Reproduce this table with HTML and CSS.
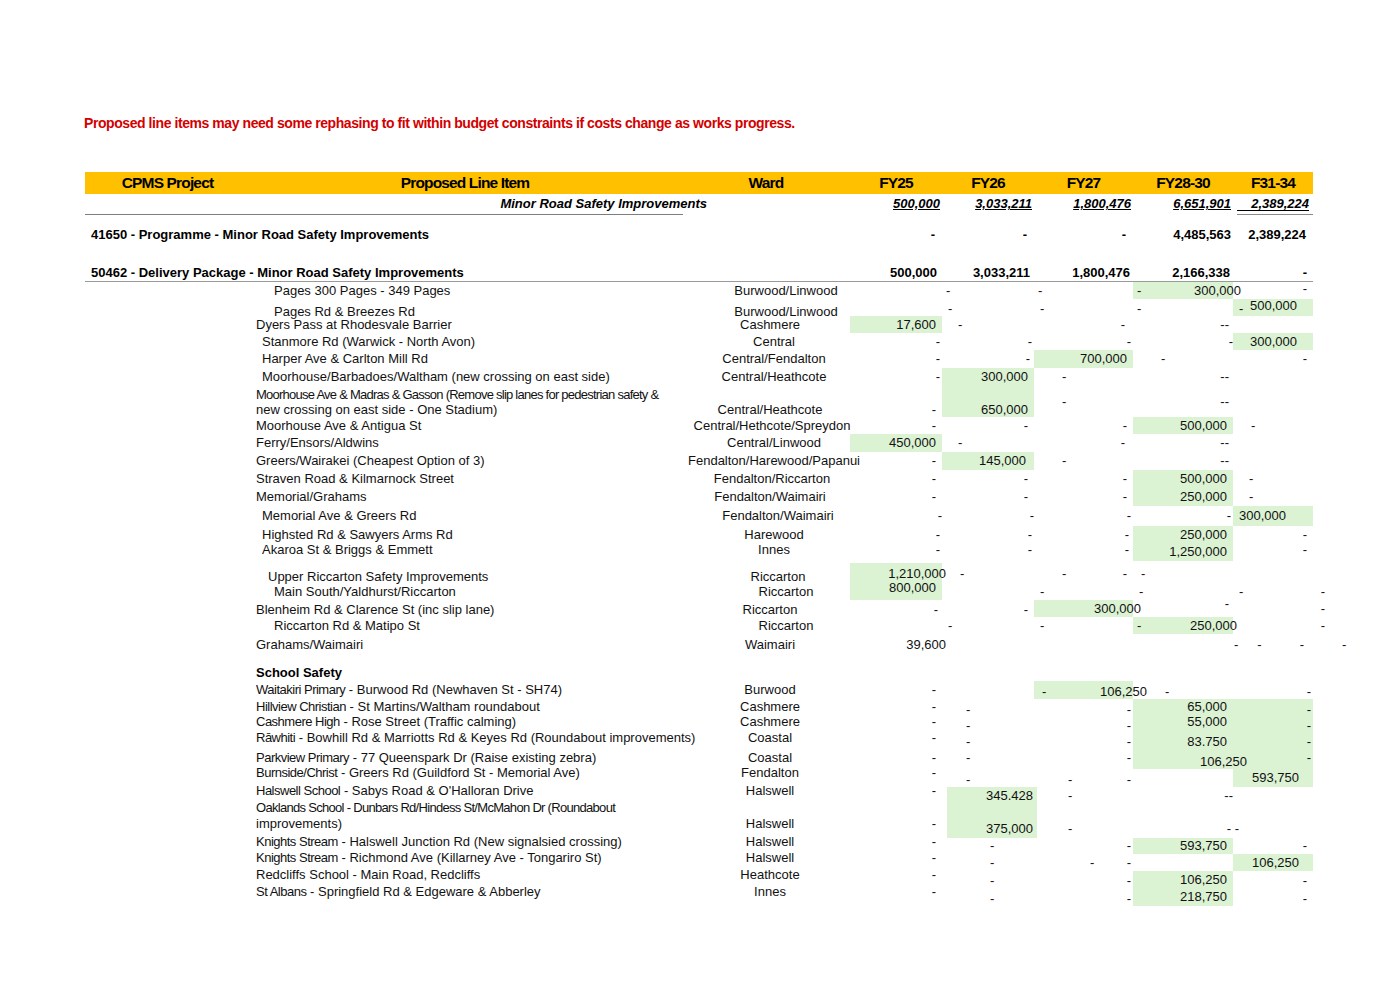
FILE: index.html
```html
<!DOCTYPE html>
<html lang="en">
<head>
<meta charset="utf-8">
<title>Minor Road Safety Improvements</title>
<link rel="stylesheet" href="styles.css">
</head>
<body>
<div class="page">
  <p class="note">Proposed line items may need some rephasing to fit within budget constraints if costs change as works progress.</p>

  <div class="sheet">
    <div class="row hdr">
      <div>CPMS Project</div>
      <div class="hpl">Proposed Line Item</div>
      <div class="hw">Ward</div>
      <div>FY25</div>
      <div>FY26</div>
      <div>FY27</div>
      <div>FY28-30</div>
      <div>F31-34</div>
    </div>

    <div class="row h20 sub">
      <div class="span3 n pr143">Minor Road Safety Improvements</div>
      <div class="n pr2"><u>500,000</u></div>
      <div class="n pr2"><u>3,033,211</u></div>
      <div class="n pr2"><u>1,800,476</u></div>
      <div class="n pr2"><u>6,651,901</u></div>
      <div class="n pr4"><span class="ubar">2,389,224</span></div>
    </div>
    <div class="rule1"><div class="rl"></div><div class="rr"></div></div>

    <div class="row h16 bold mt12">
      <div class="span3 pl6">41650 - Programme - Minor Road Safety Improvements</div>
      <div class="n pr7">-</div>
      <div class="n pr7">-</div>
      <div class="n pr7">-</div>
      <div class="n pr2">4,485,563</div>
      <div class="n pr7">2,389,224</div>
    </div>

    <div class="row h16 bold mt22">
      <div class="span3 pl6">50462 - Delivery Package - Minor Road Safety Improvements</div>
      <div class="n pr5">500,000</div>
      <div class="n pr4">3,033,211</div>
      <div class="n pr3">1,800,476</div>
      <div class="n pr3">2,166,338</div>
      <div class="n pr6">-</div>
    </div>
    <div class="rule2"></div>

    <!-- R1 -->
    <div class="row h17">
      <div></div>
      <div class="pl24">Pages 300 Pages - 349 Pages</div>
      <div class="wd w16">Burwood/Linwood</div>
      <div></div>
      <div class="l pl4">-</div>
      <div class="l pl4">-</div>
      <div class="g sb pl4"><span>-</span><span class="o8">300,000</span></div>
      <div class="n pr6 vt">-</div>
    </div>
    <!-- R2 -->
    <div class="row h17">
      <div></div>
      <div class="pl24 lo">Pages Rd &amp; Breezes Rd</div>
      <div class="wd w16 lo">Burwood/Linwood</div>
      <div></div>
      <div class="l pl6 vb">-</div>
      <div class="l pl6 vb">-</div>
      <div class="l pl4 vb">-</div>
      <div class="g sb pl6 pr16"><span class="se">-</span><span class="st">500,000</span></div>
    </div>
    <!-- R3 -->
    <div class="row h17">
      <div></div>
      <div class="pl6">Dyers Pass at Rhodesvale Barrier</div>
      <div class="wd">Cashmere</div>
      <div class="g n pr6">17,600</div>
      <div class="l pl16">-</div>
      <div class="n pr8">-</div>
      <div class="n pr4">--</div>
      <div></div>
    </div>
    <!-- R4 -->
    <div class="row h17">
      <div></div>
      <div class="pl12">Stanmore Rd (Warwick - North Avon)</div>
      <div class="wd w4">Central</div>
      <div class="n pr2">-</div>
      <div class="n pr2">-</div>
      <div class="n pr2">-</div>
      <div class="n pr0">-</div>
      <div class="g n pr16">300,000</div>
    </div>
    <!-- R5 -->
    <div class="row h18">
      <div></div>
      <div class="pl12">Harper Ave &amp; Carlton Mill Rd</div>
      <div class="wd w4">Central/Fendalton</div>
      <div class="n pr2">-</div>
      <div class="n pr4">-</div>
      <div class="g n pr6">700,000</div>
      <div class="l pl28">-</div>
      <div class="n pr6">-</div>
    </div>
    <!-- R6 -->
    <div class="row h18">
      <div></div>
      <div class="pl12">Moorhouse/Barbadoes/Waltham (new crossing on east side)</div>
      <div class="wd w4">Central/Heathcote</div>
      <div class="n pr2">-</div>
      <div class="g n pr6">300,000</div>
      <div class="l pl28">-</div>
      <div class="n pr4">--</div>
      <div></div>
    </div>
    <!-- R7 -->
    <div class="row h31">
      <div></div>
      <div class="pl6"><span class="two"><span class="cn">Moorhouse Ave &amp; Madras &amp; Gasson (Remove slip lanes for pedestrian safety &amp;</span><br>new crossing on east side - One Stadium)</span></div>
      <div class="wd vb">Central/Heathcote</div>
      <div class="n pr6 vb">-</div>
      <div class="g n pr6 vb">650,000</div>
      <div class="l pl28">-</div>
      <div class="n pr4">--</div>
      <div></div>
    </div>
    <!-- R8 -->
    <div class="row h17">
      <div></div>
      <div class="pl6">Moorhouse Ave &amp; Antigua St</div>
      <div class="wd w2">Central/Hethcote/Spreydon</div>
      <div class="n pr6">-</div>
      <div class="n pr6">-</div>
      <div class="n pr6">-</div>
      <div class="g n pr6">500,000</div>
      <div class="l pl18">-</div>
    </div>
    <!-- R9 -->
    <div class="row h18">
      <div></div>
      <div class="pl6">Ferry/Ensors/Aldwins</div>
      <div class="wd w4">Central/Linwood</div>
      <div class="g n pr6">450,000</div>
      <div class="l pl16">-</div>
      <div class="n pr8">-</div>
      <div class="n pr4">--</div>
      <div></div>
    </div>
    <!-- R10 -->
    <div class="row h18">
      <div></div>
      <div class="pl6">Greers/Wairakei (Cheapest Option of 3)</div>
      <div class="wd w4">Fendalton/Harewood/Papanui</div>
      <div class="n pr6">-</div>
      <div class="g n pr8">145,000</div>
      <div class="l pl28">-</div>
      <div class="n pr4">--</div>
      <div></div>
    </div>
    <!-- R11 -->
    <div class="row h18">
      <div></div>
      <div class="pl6">Straven Road &amp; Kilmarnock Street</div>
      <div class="wd w2">Fendalton/Riccarton</div>
      <div class="n pr6">-</div>
      <div class="n pr6">-</div>
      <div class="n pr6">-</div>
      <div class="g n pr6">500,000</div>
      <div class="l pl16">-</div>
    </div>
    <!-- R12 -->
    <div class="row h18">
      <div></div>
      <div class="pl6">Memorial/Grahams</div>
      <div class="wd">Fendalton/Waimairi</div>
      <div class="n pr6">-</div>
      <div class="n pr6">-</div>
      <div class="n pr6">-</div>
      <div class="g n pr6">250,000</div>
      <div class="l pl16">-</div>
    </div>
    <!-- R13 -->
    <div class="row h20">
      <div></div>
      <div class="pl12">Memorial Ave &amp; Greers Rd</div>
      <div class="wd w8">Fendalton/Waimairi</div>
      <div class="n pr0">-</div>
      <div class="n pr0">-</div>
      <div class="n pr2">-</div>
      <div class="n pr2">-</div>
      <div class="g l pl6">300,000</div>
    </div>
    <!-- R14 -->
    <div class="row h17">
      <div></div>
      <div class="pl12">Highsted Rd &amp; Sawyers Arms Rd</div>
      <div class="wd w4">Harewood</div>
      <div class="n pr2">-</div>
      <div class="n pr2">-</div>
      <div class="n pr4">-</div>
      <div class="g n pr6">250,000</div>
      <div class="n pr6">-</div>
    </div>
    <!-- R15 -->
    <div class="row h18">
      <div></div>
      <div class="pl12 vt">Akaroa St &amp; Briggs &amp; Emmett</div>
      <div class="wd w4 vt">Innes</div>
      <div class="n pr2 vt">-</div>
      <div class="n pr2 vt">-</div>
      <div class="n pr4 vt">-</div>
      <div class="g n pr6">1,250,000</div>
      <div class="n pr6 vt">-</div>
    </div>
    <!-- R16 -->
    <div class="row h21 mt2">
      <div></div>
      <div class="pl18 vb">Upper Riccarton Safety Improvements</div>
      <div class="wd w8 vb">Riccarton</div>
      <div class="g n"><span class="o4">1,210,000</span></div>
      <div class="l pl18">-</div>
      <div class="sb pl28 pr6"><span>-</span><span>-</span></div>
      <div class="l pl8">-</div>
      <div></div>
    </div>
    <!-- R17 -->
    <div class="row h16">
      <div></div>
      <div class="pl24">Main South/Yaldhurst/Riccarton</div>
      <div class="wd w16">Riccarton</div>
      <div class="g n pr6 hi">800,000</div>
      <div></div>
      <div class="l pl6">-</div>
      <div class="l pl6">-</div>
      <div class="sb pl6"><span>-</span><span class="o12">-</span></div>
    </div>
    <!-- R18 -->
    <div class="row h17">
      <div></div>
      <div class="pl6 vb">Blenheim Rd &amp; Clarence St (inc slip lane)</div>
      <div class="wd vb">Riccarton</div>
      <div class="n pr4 vb">-</div>
      <div class="n pr6 vb">-</div>
      <div class="g n"><span class="o8">300,000</span></div>
      <div class="n pr4 hi">-</div>
      <div class="n"><span class="o12">-</span></div>
    </div>
    <!-- R19 -->
    <div class="row h17">
      <div></div>
      <div class="pl24">Riccarton Rd &amp; Matipo St</div>
      <div class="wd w16">Riccarton</div>
      <div></div>
      <div class="l pl6">-</div>
      <div class="l pl6">-</div>
      <div class="g sb pl4"><span>-</span><span class="o4">250,000</span></div>
      <div class="n"><span class="o12">-</span></div>
    </div>
    <!-- R20 -->
    <div class="row h21">
      <div></div>
      <div class="pl6">Grahams/Waimairi</div>
      <div class="wd">Waimairi</div>
      <div class="n"><span class="o4">39,600</span></div>
      <div></div>
      <div></div>
      <div></div>
      <div class="l dashes"><span>-</span><span>-</span><span>-</span><span>-</span></div>
    </div>

    <!-- School Safety -->
    <div class="row h16 mt10">
      <div></div>
      <div class="pl6 bold">School Safety</div>
      <div></div><div></div><div></div><div></div><div></div><div></div>
    </div>
    <!-- R22 -->
    <div class="row h18">
      <div></div>
      <div class="pl6"><span><span class="cs">Waitakiri Primary</span> - Burwood Rd (Newhaven St - SH74)</span></div>
      <div class="wd">Burwood</div>
      <div class="n pr6">-</div>
      <div></div>
      <div class="g sb pl8 vb"><span>-</span><span class="o14">106,250</span></div>
      <div class="l pl32 vb">-</div>
      <div class="n pr2 vb">-</div>
    </div>
    <!-- R23 -->
    <div class="row h15">
      <div></div>
      <div class="pl6"><span><span class="cs">Hillview Christian</span> - St Martins/Waltham roundabout</span></div>
      <div class="wd">Cashmere</div>
      <div class="n pr6">-</div>
      <div class="l pl24 lo">-</div>
      <div class="n pr2 lo">-</div>
      <div class="g n pr6">65,000</div>
      <div class="g n pr2 lo">-</div>
    </div>
    <!-- R24 -->
    <div class="row h16">
      <div></div>
      <div class="pl6"><span><span class="cs">Cashmere High</span> - Rose Street (Traffic calming)</span></div>
      <div class="wd">Cashmere</div>
      <div class="n pr6">-</div>
      <div class="l pl24 lo">-</div>
      <div class="n pr2 lo">-</div>
      <div class="g n pr6">55,000</div>
      <div class="g n pr2 lo">-</div>
    </div>
    <!-- R25 -->
    <div class="row h16">
      <div></div>
      <div class="pl6"><span><span class="cs">Rāwhiti</span> - Bowhill Rd &amp; Marriotts Rd &amp; Keyes Rd (Roundabout improvements)</span></div>
      <div class="wd">Coastal</div>
      <div class="n pr6">-</div>
      <div class="l pl24 lo">-</div>
      <div class="n pr2 lo">-</div>
      <div class="g n pr6 lo">83,750</div>
      <div class="g n pr2 lo">-</div>
    </div>
    <!-- R26 -->
    <div class="row h23">
      <div></div>
      <div class="pl6"><span><span class="cs">Parkview Primary</span> - 77 Queenspark Dr (Raise existing zebra)</span></div>
      <div class="wd">Coastal</div>
      <div class="n pr6">-</div>
      <div class="l pl24">-</div>
      <div class="n pr2">-</div>
      <div class="g n vb"><span class="o14 ov">106,250</span></div>
      <div class="g n pr2">-</div>
    </div>
    <!-- R27 -->
    <div class="row h18">
      <div></div>
      <div class="pl6 hi"><span><span class="cs">Burnside/Christ</span> - Greers Rd (Guildford St - Memorial Ave)</span></div>
      <div class="wd hi">Fendalton</div>
      <div class="n pr6 hi">-</div>
      <div class="l pl24 vb">-</div>
      <div class="sb pl34 pr2 vb"><span>-</span><span>-</span></div>
      <div></div>
      <div class="g n pr14">593,750</div>
    </div>
    <!-- R28 -->
    <div class="row h13">
      <div></div>
      <div class="pl6 hi"><span><span class="cs">Halswell School</span> - Sabys Road &amp; O'Halloran Drive</span></div>
      <div class="wd hi">Halswell</div>
      <div class="n pr6 hi">-</div>
      <div class="g gs n pr4 lo">345,428</div>
      <div class="l pl34 lo">-</div>
      <div class="n pr0 lo">--</div>
      <div></div>
    </div>
    <!-- R29 -->
    <div class="row h38">
      <div></div>
      <div class="pl6 vt"><span class="two2"><span class="cx">Oaklands School - Dunbars Rd/Hindess St/McMahon Dr (Roundabout</span><br>improvements)</span></div>
      <div class="wd lo pb10">Halswell</div>
      <div class="n pr6 lo pb10">-</div>
      <div class="g gs n pr4 lo pb5">375,000</div>
      <div class="l pl34 lo pb5">-</div>
      <div class="n lo pb5"><span class="o6">- -</span></div>
      <div></div>
    </div>
    <!-- R30 -->
    <div class="row h16">
      <div></div>
      <div class="pl6 hi"><span><span class="cs">Knights Stream</span> - Halswell Junction Rd (New signalsied crossing)</span></div>
      <div class="wd hi">Halswell</div>
      <div class="n pr6 hi">-</div>
      <div class="l pl48">-</div>
      <div class="n pr2">-</div>
      <div class="g n pr6">593,750</div>
      <div class="n pr6">-</div>
    </div>
    <!-- R31 -->
    <div class="row h17">
      <div></div>
      <div class="pl6 hi"><span><span class="cs">Knights Stream</span> - Richmond Ave (Killarney Ave - Tongariro St)</span></div>
      <div class="wd hi">Halswell</div>
      <div class="n pr6 hi">-</div>
      <div class="l pl48">-</div>
      <div class="sb pl56 pr2"><span>-</span><span>-</span></div>
      <div></div>
      <div class="g n pr14">106,250</div>
    </div>
    <!-- R32 -->
    <div class="row h17">
      <div></div>
      <div class="pl6 hi">Redcliffs School - Main Road, Redcliffs</div>
      <div class="wd hi">Heathcote</div>
      <div class="n pr6 hi">-</div>
      <div class="l pl48 vb">-</div>
      <div class="n pr2 vb">-</div>
      <div class="g n pr6">106,250</div>
      <div class="n pr6 vb">-</div>
    </div>
    <!-- R33 -->
    <div class="row h18">
      <div></div>
      <div class="pl6 hi"><span><span class="cs">St Albans</span> - Springfield Rd &amp; Edgeware &amp; Abberley</span></div>
      <div class="wd hi">Innes</div>
      <div class="n pr6 hi">-</div>
      <div class="l pl48 vb">-</div>
      <div class="n pr2 vb">-</div>
      <div class="g n pr6">218,750</div>
      <div class="n pr6 vb">-</div>
    </div>
  </div>
</div>
</body>
</html>
```

FILE: styles.css
```css
* { box-sizing: border-box; margin: 0; padding: 0; }

html, body { background: #ffffff; }

body {
  font-family: "Liberation Sans", Arial, sans-serif;
  color: #111;
}

.page {
  width: 1398px;
  height: 989px;
  padding: 115px 0 0 85px;
}

.note {
  color: #d40000;
  font-weight: bold;
  font-size: 14px;
  line-height: 16px;
  height: 16px;
  margin-left: -1px;
  letter-spacing: -0.43px;
}

.sheet {
  width: 1228px;
  margin-top: 41px;
  font-size: 13px;
  line-height: 14px;
}

.row {
  display: grid;
  grid-template-columns: 165px 440px 160px 92px 92px 99px 100px 80px;
}

.row > div {
  display: flex;
  align-items: center;
  white-space: nowrap;
  min-width: 0;
}

/* header */
.hdr {
  height: 22px;
  background: #ffc000;
  font-weight: bold;
  font-size: 15.5px;
  letter-spacing: -0.85px;
  color: #000;
}
.row.hdr > div { justify-content: center; }
.row.hdr > .hpl { padding-right: 10px; }
.row.hdr > .hw { padding-right: 8px; }

/* subtotal */
.sub { font-weight: bold; font-style: italic; color: #000; }
.sub u { text-decoration: underline; text-underline-offset: 1px; }
.ubar {
  display: block;
  width: 72px;
  text-align: right;
  border-bottom: 1px solid #000;
  line-height: 13px;
}

.rule1 { display: flex; height: 1px; }
.rule1 .rl { width: 598px; background: #7d7d7d; }
.rule1 .rr { width: 76px; margin-left: auto; background: #8a8a8a; }

.rule2 { height: 1px; background: #9a9a9a; }

.bold { font-weight: bold; color: #000; }

.span3 { grid-column: 1 / 4; }

/* row heights */
.h13 { height: 13px; }
.h15 { height: 15px; }
.h16 { height: 16px; }
.h17 { height: 17px; }
.h18 { height: 18px; }
.h20 { height: 20px; }
.h21 { height: 21px; }
.h23 { height: 23px; }
.h31 { height: 31px; }
.h38 { height: 38px; }

.mt2 { margin-top: 2px; }
.mt10 { margin-top: 10px; }
.mt12 { margin-top: 12px; }
.mt22 { margin-top: 22px; }

/* cell alignment */
.row > .n { justify-content: flex-end; }
.row > .l { justify-content: flex-start; }
.row > .sb { justify-content: space-between; }
.row > .wd { justify-content: center; }

.row > .vt { align-items: flex-start; }
.row > .vb { align-items: flex-end; }
.row > .hi { align-items: flex-start; line-height: 8px; }
.row > .lo { align-items: flex-end; line-height: 8px; }
.st { align-self: flex-start; }
.se { align-self: flex-end; }

/* green highlighted cells */
.g { background: #dbf2d3; }
.gs { margin: 0 -3px 0 5px; }

/* two-line items */
.two { line-height: 15px; }
.two2 { line-height: 16px; }
.cn { letter-spacing: -0.75px; }
.cs { letter-spacing: -0.5px; }
.cx { letter-spacing: -0.7px; }

/* ward shifts */
.w2 { padding-left: 4px; }
.w4 { padding-left: 8px; }
.w8 { padding-left: 16px; }
.w16 { padding-left: 32px; }

/* padding */
.pr0 { padding-right: 0; }
.pr2 { padding-right: 2px; }
.pr3 { padding-right: 3px; }
.pr4 { padding-right: 4px; }
.pr5 { padding-right: 5px; }
.pr6 { padding-right: 6px; }
.pr7 { padding-right: 7px; }
.pr8 { padding-right: 8px; }
.pr14 { padding-right: 14px; }
.pr16 { padding-right: 16px; }
.pr143 { padding-right: 143px; }

.pl4 { padding-left: 4px; }
.pl6 { padding-left: 6px; }
.pl8 { padding-left: 8px; }
.pl12 { padding-left: 12px; }
.pl16 { padding-left: 16px; }
.pl18 { padding-left: 18px; }
.pl24 { padding-left: 24px; }
.pl28 { padding-left: 28px; }
.pl32 { padding-left: 32px; }
.pl34 { padding-left: 34px; }
.pl48 { padding-left: 48px; }
.pl56 { padding-left: 56px; }

.pb5 { padding-bottom: 5px; }
.pb10 { padding-bottom: 10px; }

/* content overhanging the cell's right edge */
.o4 { margin-right: -4px; }
.o6 { margin-right: -6px; }
.o8 { margin-right: -8px; }
.o12 { margin-right: -12px; }
.o14 { margin-right: -14px; }
.ov { position: relative; z-index: 1; }

.dashes span:nth-child(1) { margin-left: 1px; }
.dashes span:nth-child(2) { margin-left: 19px; }
.dashes span:nth-child(3) { margin-left: 38px; }
.dashes span:nth-child(4) { margin-left: 38px; }
```
